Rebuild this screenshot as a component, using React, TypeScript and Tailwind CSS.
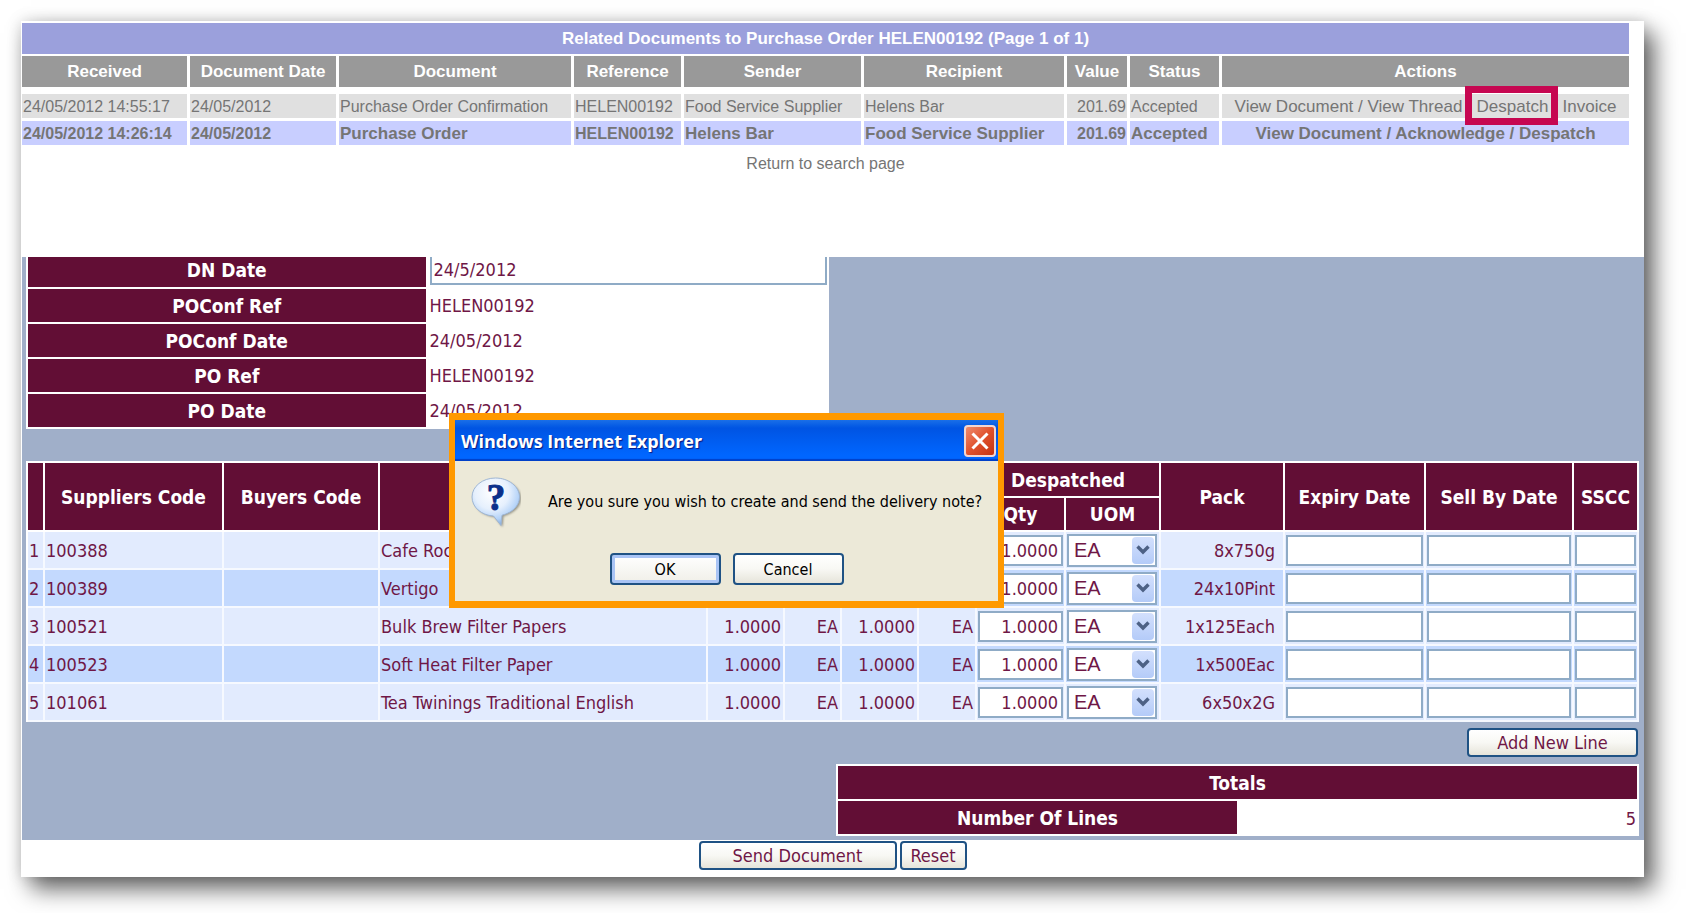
import React from "react";

const TAHOMA = "font-['DejaVu_Sans_Condensed','DejaVu_Sans',sans-serif]";

const docColumns = [
  { label: "Received", width: "w-[168px]" },
  { label: "Document Date", width: "w-[149px]" },
  { label: "Document", width: "w-[235px]" },
  { label: "Reference", width: "w-[110px]" },
  { label: "Sender", width: "w-[180px]" },
  { label: "Recipient", width: "w-[203px]" },
  { label: "Value", width: "w-[63px]" },
  { label: "Status", width: "w-[92px]" },
  { label: "Actions", width: "w-[410px]" },
];

const itemColumns = [
  "w-[17px]",
  "w-[179px]",
  "w-[156px]",
  "w-[328px]",
  "w-[77px]",
  "w-[57px]",
  "w-[77px]",
  "w-[58px]",
  "w-[89px]",
  "w-[95px]",
  "w-[124px]",
  "w-[141px]",
  "w-[148px]",
  "w-[65px]",
];

const items = [
  { code: "100388", name: "Cafe Roc", pack: "8x750g" },
  { code: "100389", name: "Vertigo", pack: "24x10Pint" },
  { code: "100521", name: "Bulk Brew Filter Papers", pack: "1x125Each" },
  { code: "100523", name: "Soft Heat Filter Paper", pack: "1x500Eac" },
  { code: "101061", name: "Tea Twinings Traditional English", pack: "6x50x2G" },
];

const details = [
  ["POConf Ref", "HELEN00192"],
  ["POConf Date", "24/05/2012"],
  ["PO Ref", "HELEN00192"],
  ["PO Date", "24/05/2012"],
];

function RelatedDocuments() {
  const head = "h-[38px] border-b-[7px] border-r-[3px] border-white bg-[#999999] p-0 text-[17px] font-bold text-white";
  const grey = "h-[27px] border-b-[3px] border-r-[3px] border-white bg-[#e0e0e0] px-px pb-0 pt-0.5";
  const blue = "h-[27px] border-b-[3px] border-r-[3px] border-white bg-[#c8ceff] px-px pb-0 pt-0.5 font-bold";
  return (
    <table className="ml-px w-[1610px] max-w-full table-fixed border-separate border-spacing-0 whitespace-nowrap text-left text-base leading-[22px] text-[#757575]">
      <colgroup>
        {docColumns.map((c) => (
          <col key={c.label} className={c.width} />
        ))}
      </colgroup>
      <thead>
        <tr>
          <th
            colSpan={9}
            className="h-[33px] border-b-2 border-r-[3px] border-white bg-[#9ba0dc] p-0 text-center text-[17px] font-bold text-white"
          >
            Related Documents to Purchase Order HELEN00192 (Page 1 of 1)
          </th>
        </tr>
        <tr className="text-center">
          {docColumns.map((c) => (
            <th key={c.label} className={head}>
              {c.label}
            </th>
          ))}
        </tr>
      </thead>
      <tbody>
        <tr>
          <td className={grey}>24/05/2012 14:55:17</td>
          <td className={grey}>24/05/2012</td>
          <td className={grey}>Purchase Order Confirmation</td>
          <td className={grey}>HELEN00192</td>
          <td className={grey}>Food Service Supplier</td>
          <td className={grey}>Helens Bar</td>
          <td className={`${grey} text-right`}>201.69</td>
          <td className={grey}>Accepted</td>
          <td className={`${grey} text-center text-[17px]`}>
            <a href="#view">View Document</a> / <a href="#thread">View Thread</a> /{" "}
            <span className="relative inline-block">
              <a href="#despatch">Despatch</a>
              <span className="pointer-events-none absolute -bottom-[7px] -left-3 -right-2.5 -top-[10px] z-10 border-[7px] border-[#c60751]" />
            </span>{" "}
            / <a href="#invoice">Invoice</a>
          </td>
        </tr>
        <tr>
          <td className={blue}>24/05/2012 14:26:14</td>
          <td className={blue}>24/05/2012</td>
          <td className={`${blue} text-[17px]`}>Purchase Order</td>
          <td className={blue}>HELEN00192</td>
          <td className={`${blue} text-[17px]`}>Helens Bar</td>
          <td className={`${blue} text-[17px]`}>Food Service Supplier</td>
          <td className={`${blue} text-right`}>201.69</td>
          <td className={`${blue} text-[17px]`}>Accepted</td>
          <td className={`${blue} text-center text-[17px]`}>
            <a href="#view-order">View Document</a> / <a href="#acknowledge">Acknowledge</a> /{" "}
            <a href="#despatch-order">Despatch</a>
          </td>
        </tr>
      </tbody>
    </table>
  );
}

function DetailsTable() {
  const th = "w-1/2 border-2 border-b-0 border-white bg-[#620e35] p-0 text-center text-[19px] font-bold text-white";
  return (
    <table className="w-[803px] max-w-full table-fixed border-separate border-spacing-0 border-b-2 border-white bg-white text-left leading-6">
      <tbody>
        <tr>
          <th className="h-[30px] w-1/2 border-x-2 border-white bg-[#620e35] px-0 pb-1 pt-0 text-center text-[19px] font-bold text-white">
            <label htmlFor="dn-date">DN Date</label>
          </th>
          <td className="px-0.5 pb-0.5 pt-0 align-top">
            <input
              id="dn-date"
              defaultValue="24/5/2012"
              className="block h-7 w-full border-2 border-t-0 border-[#8fabc6] bg-white px-0.5 pb-0.5 outline-none"
            />
          </td>
        </tr>
        {details.map(([label, value]) => (
          <tr key={label}>
            <th className={`h-[35px] ${th}`}>{label}</th>
            <td className="px-0.5 py-0 pt-0.5">{value}</td>
          </tr>
        ))}
      </tbody>
    </table>
  );
}

function UomSelect({ line }: { line: number }) {
  return (
    <div className="relative mr-px">
      <select
        aria-label={`UOM for line ${line}`}
        className="block h-[33px] w-full appearance-none border-2 border-[#8fabc6] bg-white pl-[5px] font-['Liberation_Sans',Arial,sans-serif] text-xl leading-7 outline-none"
      >
        <option>EA</option>
      </select>
      <span className="pointer-events-none absolute bottom-[3px] right-[3px] top-[3px] flex w-[22px] items-center justify-center rounded-sm bg-linear-to-b from-[#d3e0fd] to-[#b4cbf8]">
        <svg viewBox="0 0 14 12" className="h-3 w-3.5" aria-hidden="true">
          <path d="M1.500 2.500 7 8l5.500-5.500" fill="none" stroke="#4d6185" strokeWidth="3.400" />
        </svg>
      </span>
    </div>
  );
}

function ItemsTable() {
  const th = "border-b-2 border-r-2 border-white bg-[#620e35] p-0 text-[19px] font-bold text-white";
  const box = "block h-[31px] w-full border-2 border-[#8fabc6] bg-white outline-none";
  return (
    <table className="mt-8 w-full table-fixed border-separate border-spacing-0 whitespace-nowrap border-l-2 border-t-2 border-white leading-6">
      <colgroup>
        {itemColumns.map((w, i) => (
          <col key={i} className={w} />
        ))}
      </colgroup>
      <thead>
        <tr>
          <th rowSpan={2} className={th} />
          <th rowSpan={2} className={th}>Suppliers Code</th>
          <th rowSpan={2} className={th}>Buyers Code</th>
          <th rowSpan={2} className={th} />
          <th colSpan={2} className={`h-[35px] ${th}`} />
          <th colSpan={2} className={th} />
          <th colSpan={2} className={th}>Despatched</th>
          <th rowSpan={2} className={th}>Pack</th>
          <th rowSpan={2} className={th}>Expiry Date</th>
          <th rowSpan={2} className={th}>Sell By Date</th>
          <th rowSpan={2} className={th}>SSCC</th>
        </tr>
        <tr>
          <th className={`h-[34px] ${th}`} />
          <th className={th} />
          <th className={th} />
          <th className={th} />
          <th className={th}>Qty</th>
          <th className={th}>UOM</th>
        </tr>
      </thead>
      <tbody>
        {items.map((item, i) => {
          const n = i + 1;
          const tone = i % 2 ? "bg-[#c3d9fe]" : "bg-[#e2ebfe]";
          const td = `h-[38px] border-b-2 border-r-2 border-[#f6f9ff] pb-0 pl-px pt-0.5 ${tone}`;
          const field = `h-[38px] border-b-2 border-r-2 border-[#f6f9ff] px-px py-0 ${tone}`;
          return (
            <tr key={item.code}>
              <td className={td}>{n}</td>
              <td className={td}>{item.code}</td>
              <td className={td} />
              <td className={td}>{item.name}</td>
              <td className={`${td} pr-0.5 text-right`}>1.0000</td>
              <td className={`${td} pr-0.5 text-right`}>EA</td>
              <td className={`${td} pr-0.5 text-right`}>1.0000</td>
              <td className={`${td} pr-0.5 text-right`}>EA</td>
              <td className={field}>
                <input
                  aria-label={`Despatched quantity for line ${n}`}
                  defaultValue="1.0000"
                  className={`${box} px-[3px] text-right`}
                />
              </td>
              <td className={field}>
                <UomSelect line={n} />
              </td>
              <td className={`${td} pr-2 text-right`}>{item.pack}</td>
              <td className={field}>
                <input aria-label={`Expiry date for line ${n}`} className={box} />
              </td>
              <td className={field}>
                <input aria-label={`Sell by date for line ${n}`} className={box} />
              </td>
              <td className={field}>
                <input aria-label={`SSCC for line ${n}`} className={box} />
              </td>
            </tr>
          );
        })}
      </tbody>
    </table>
  );
}

const pageButton =
  "h-[29px] rounded-[4px] border-2 border-[#1f5284] bg-linear-to-b from-white via-[#f8f8f4] to-[#e6e4da] leading-6";

function QuestionIcon() {
  return (
    <svg viewBox="0 0 50 54" className="h-[54px] w-[50px] shrink-0" aria-hidden="true">
      <defs>
        <radialGradient id="bubble" cx="0.42" cy="0.3" r="0.72">
          <stop offset="0" stopColor="#ffffff" />
          <stop offset="0.5" stopColor="#e6f0fd" />
          <stop offset="0.8" stopColor="#b3d2f8" />
          <stop offset="1" stopColor="#7fa9dc" />
        </radialGradient>
        <filter id="soft" x="-20%" y="-20%" width="140%" height="140%">
          <feGaussianBlur stdDeviation="1.200" />
        </filter>
      </defs>
      <path
        d="M26 4C39 4 50 12 50 22.500c0 8.500-7.500 15-17.500 17.500L31.500 51 23.500 41C11.500 40 3 32 3 22.500 3 12 13 4 26 4z"
        fill="#5f5e55"
        opacity="0.650"
        filter="url(#soft)"
      />
      <path
        d="M24.500 2C37.500 2 48.500 10.500 48.500 21c0 9-7.500 15.800-17.500 18.200L30 49.500 22.500 40C10 39.200 1 31 1 21 1 10.500 11.500 2 24.500 2z"
        fill="url(#bubble)"
        stroke="#9fb6d3"
        strokeWidth="1"
        strokeLinejoin="round"
      />
      <text
        x="25"
        y="34"
        textAnchor="middle"
        fontFamily="'Liberation Serif', serif"
        fontWeight="700"
        fontSize="37"
        fill="#0b2f8a"
        stroke="#0b2f8a"
        strokeWidth="1"
      >
        ?
      </text>
    </svg>
  );
}

function ConfirmDialog() {
  return (
    <div
      role="dialog"
      aria-labelledby="dialog-title"
      className="absolute left-[428px] top-[392px] z-20 h-[195px] w-[555px] border-x-[6px] border-y-[7px] border-[#ff9900] bg-[#ece9d8] text-black"
    >
      <div className="flex h-[41px] items-center justify-between bg-linear-to-b from-[#1a6fe8] via-[#0054e3] via-20% to-[#0066ff] to-85% pl-1.5 pr-0.5 shadow-[inset_0_-2px_1px_#0040c8]">
        <h2
          id="dialog-title"
          className="font-['Open_Sans','Noto_Sans',sans-serif] text-lg font-bold leading-6 text-white [text-shadow:1px_1px_1px_#0a1883]"
        >
          Windows Internet Explorer
        </h2>
        <button
          type="button"
          aria-label="Close"
          className="flex h-8 w-8 items-center justify-center rounded-[4px] border-2 border-[#f3d6d0] bg-linear-to-br from-[#ee8a6c] via-[#e0512c] to-[#c43210]"
        >
          <svg viewBox="0 0 20 20" className="h-5 w-5" aria-hidden="true">
            <path d="M2.500 2.500l15 15M17.500 2.500l-15 15" stroke="#fff" strokeWidth="3" fill="none" />
          </svg>
        </button>
      </div>
      <div className="flex items-start gap-[27px] pl-4 pt-[15px]">
        <QuestionIcon />
        <p className="whitespace-nowrap pt-[14px] text-base leading-6">
          Are you sure you wish to create and send the delivery note?
        </p>
      </div>
      <div className="mt-[23px] flex justify-center gap-3 text-base leading-6">
        <button
          type="button"
          className="h-8 w-[111px] rounded-[4px] border-2 border-[#1f5284] bg-linear-to-b from-white to-[#f0efe8] pt-0.5 shadow-[inset_0_0_0_3px_#a9c4f5]"
        >
          OK
        </button>
        <button
          type="button"
          className="h-8 w-[111px] rounded-[4px] border-2 border-[#1f5284] bg-linear-to-b from-white via-[#f8f8f4] to-[#e6e4da] pt-0.5"
        >
          Cancel
        </button>
      </div>
    </div>
  );
}

export default function App() {
  return (
    <div className="bg-white pb-9 pl-[21px] pr-[42px] pt-[21px]">
      <main
        className={`relative bg-white pt-0.5 text-lg text-[#6f1746] shadow-[10px_12px_22px_rgba(0,0,0,0.600),0_0_14px_rgba(0,0,0,0.150)] ${TAHOMA}`}
      >
        <section className="h-[234px] font-['Liberation_Sans',Arial,sans-serif]">
          <RelatedDocuments />
          <p className="ml-px mt-1 w-[1607px] max-w-full text-center text-base leading-6 text-[#757575]">
            <a href="#search">Return to search page</a>
          </p>
        </section>

        <section className="ml-px bg-[#a0afc9] pb-1 pl-1 pr-[5px]">
          <DetailsTable />
          <ItemsTable />
          <div className="flex justify-end px-px pb-[7px] pt-1.5">
            <button type="button" className={`w-[171px] ${pageButton}`}>
              Add New Line
            </button>
          </div>
          <table className="ml-auto w-[803px] max-w-full table-fixed border-separate border-spacing-0 border-l-2 border-t-2 border-white bg-white leading-6">
            <colgroup>
              <col className="w-[399px]" />
              <col />
            </colgroup>
            <tbody>
              <tr>
                <th
                  colSpan={2}
                  className="h-[35px] border-b-2 border-r-2 border-white bg-[#620e35] p-0 text-[19px] font-bold text-white"
                >
                  Totals
                </th>
              </tr>
              <tr>
                <th className="h-[35px] border-b-2 border-white bg-[#620e35] p-0 text-[19px] font-bold text-white">
                  Number Of Lines
                </th>
                <td className="px-[3px] py-0 text-right">5</td>
              </tr>
            </tbody>
          </table>
        </section>

        <footer className="flex h-[37px] justify-center gap-[3px] pt-px">
          <button type="button" className={`w-[198px] ${pageButton}`}>
            Send Document
          </button>
          <button type="button" className={`w-[67px] ${pageButton}`}>
            Reset
          </button>
        </footer>

        <ConfirmDialog />
      </main>
    </div>
  );
}
